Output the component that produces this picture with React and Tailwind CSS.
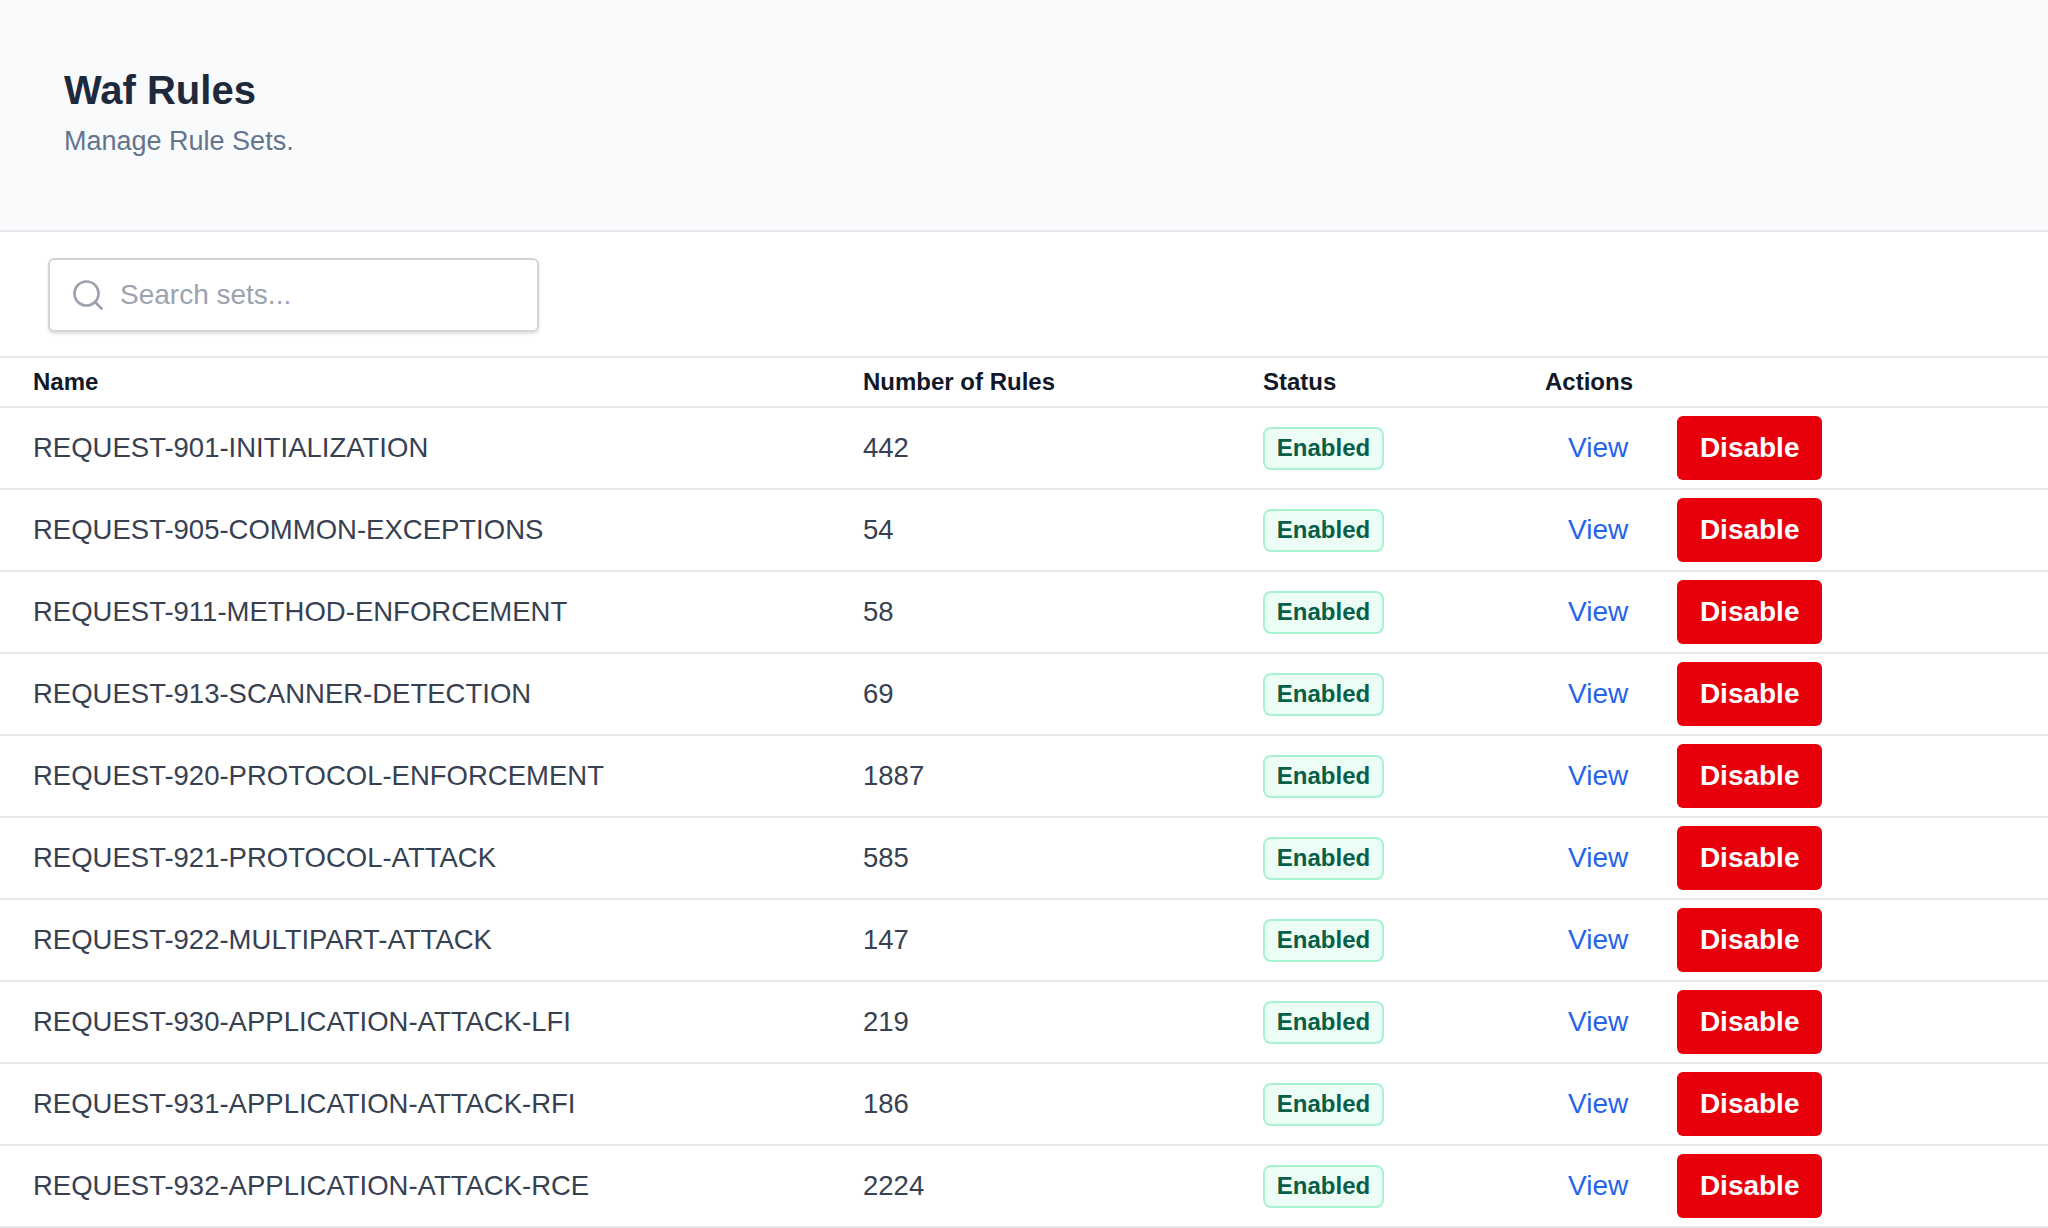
import React from "react";

const rows = [
  ["REQUEST-901-INITIALIZATION", "442"],
  ["REQUEST-905-COMMON-EXCEPTIONS", "54"],
  ["REQUEST-911-METHOD-ENFORCEMENT", "58"],
  ["REQUEST-913-SCANNER-DETECTION", "69"],
  ["REQUEST-920-PROTOCOL-ENFORCEMENT", "1887"],
  ["REQUEST-921-PROTOCOL-ATTACK", "585"],
  ["REQUEST-922-MULTIPART-ATTACK", "147"],
  ["REQUEST-930-APPLICATION-ATTACK-LFI", "219"],
  ["REQUEST-931-APPLICATION-ATTACK-RFI", "186"],
  ["REQUEST-932-APPLICATION-ATTACK-RCE", "2224"],
];

export default function App() {
  return (
    <div className="min-h-screen bg-white overflow-hidden" style={{ fontFamily: '"Liberation Sans", Arial, sans-serif' }}>
      <div className="h-[232px] bg-[#f8fafc] border-b-2 border-[#e5e7eb] pl-[64px] pt-[66px]">
        <h1 className="text-[40px] leading-[48px] font-bold text-[#1e293b]">Waf Rules</h1>
        <p className="mt-[10px] text-[27px] leading-[34px] text-[#64748b]">Manage Rule Sets.</p>
      </div>
      <div className="pl-[48px] pt-[26px] pb-[24px]">
        <div className="w-[491px] h-[74px] border-2 border-[#d1d5db] rounded-[6px] shadow-[0_2px_3px_rgba(0,0,0,0.12)] flex items-center pl-[20px]">
          <svg width="36" height="36" viewBox="0 0 24 24" fill="none" stroke="#9ca3af" strokeWidth="1.8" strokeLinecap="round">
            <circle cx="11" cy="11" r="8" />
            <path d="m21 21-4.3-4.3" />
          </svg>
          <span className="ml-[14px] text-[28px] text-[#9ca3af]">Search sets...</span>
        </div>
      </div>
      <div className="border-t-2 border-[#e5e7eb]">
        <div className="flex items-center h-[50px] border-b-2 border-[#e5e7eb] text-[24px] font-bold text-[#111827]">
          <div className="w-[863px] pl-[33px]">Name</div>
          <div className="w-[400px]">Number of Rules</div>
          <div className="w-[282px]">Status</div>
          <div>Actions</div>
        </div>
        {rows.map(([n, c]) => (
          <div key={n} className="flex items-center h-[82px] border-b-2 border-[#e5e7eb] text-[27.5px] text-[#374151]">
            <div className="w-[863px] pl-[33px]">{n}</div>
            <div className="w-[400px]">{c}</div>
            <div className="w-[282px]">
              <span className="inline-flex items-center justify-center w-[121px] h-[43px] rounded-[8px] border-2 border-[#a7f3d0] bg-[#ecfdf5] text-[#065f46] font-bold text-[24px]">Enabled</span>
            </div>
            <div className="flex items-center">
              <span className="ml-[23px] text-[#2563eb] text-[28px]">View</span>
              <span className="ml-[49px] inline-flex items-center justify-center w-[145px] h-[64px] rounded-[6px] bg-[#e7000b] text-white font-bold text-[28px]">Disable</span>
            </div>
          </div>
        ))}
      </div>
    </div>
  );
}
